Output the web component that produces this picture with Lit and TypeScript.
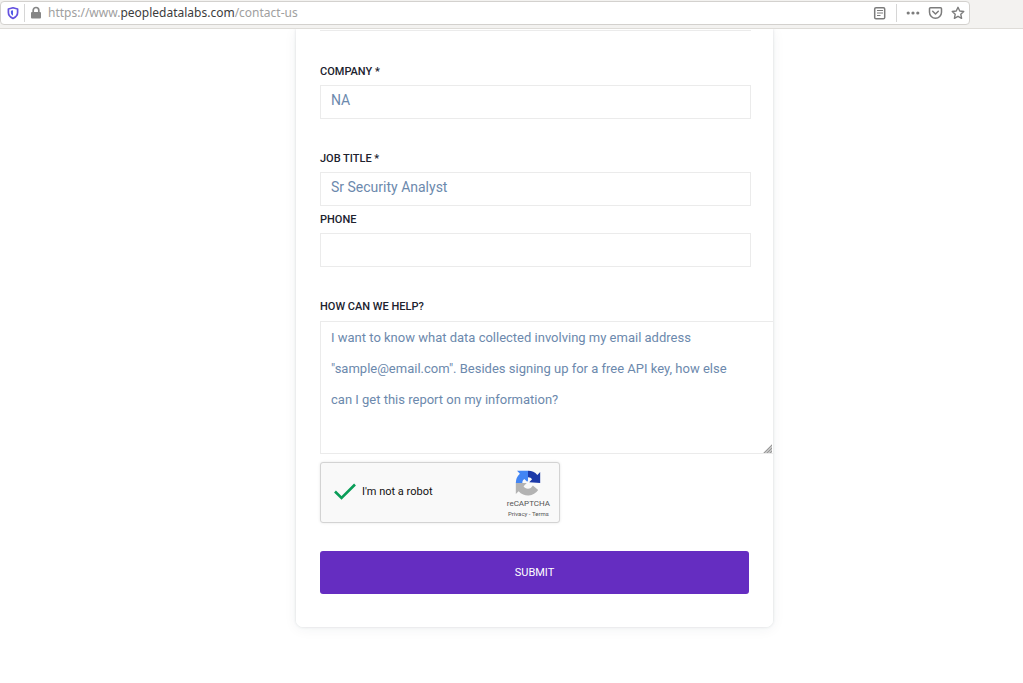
import { LitElement, html, css } from "lit";
import { customElement, property } from "lit/decorators.js";

@customElement("browser-bar")
class BrowserBar extends LitElement {
  static styles = css`
    :host {
      display: block;
    }
    .bar {
      box-sizing: border-box;
      height: 29px;
      padding-top: 1px;
      background: #f3f2f0;
      border-bottom: 1px solid #dedcd8;
    }
    .address {
      box-sizing: border-box;
      display: flex;
      align-items: center;
      height: 24px;
      margin-right: 53px;
      padding: 0 4px 0 6px;
      background: #fff;
      border: 1px solid #d3d1ce;
      border-radius: 4px;
    }
    button {
      display: block;
      flex: none;
      margin: 0;
      padding: 0;
      border: 0;
      background: none;
      line-height: 0;
    }
    svg {
      display: block;
    }
    .divider {
      flex: none;
      width: 1px;
      height: 18px;
      background: #d6d6d6;
      margin: 0 5px;
    }
    .url {
      flex: 1;
      min-width: 0;
      margin-left: 6px;
      font: 12px/18px "Noto Sans", "Open Sans", sans-serif;
      color: #a0a0a0;
      white-space: nowrap;
    }
    .host {
      color: #3c3c3c;
    }
    .tools {
      display: flex;
      align-items: center;
      gap: 8px;
    }
    .tools .divider {
      margin: 0 1px;
    }
  `;

  render() {
    return html`
      <header class="bar">
        <div class="address">
          <button aria-label="Tracking protection">
            <svg width="12" height="14" viewBox="0 0 12 14">
              <path d="M6 1.800 10.600 3v3.600c0 2.700-1.700 4.600-4.600 5.900C3.100 11.200 1.400 9.300 1.400 6.600V3z" fill="#fff" stroke="#6552e0" stroke-width="1.700" stroke-linejoin="round" />
              <path d="M6 4.200v5.600C4.500 8.900 3.900 7.900 3.900 6.600V4.700z" fill="#4f5be8" />
            </svg>
          </button>
          <span class="divider"></span>
          <button aria-label="Site information">
            <svg width="12" height="14" viewBox="0 0 12 14">
              <rect x="1" y="6" width="10" height="6.500" rx="1" fill="#858585" />
              <path d="M3.200 6.500V4.300a2.800 2.800 0 0 1 5.600 0v2.200" fill="none" stroke="#858585" stroke-width="1.700" />
            </svg>
          </button>
          <span class="url">https://www.<span class="host">peopledatalabs.com</span>/contact-us</span>
          <div class="tools">
            <button aria-label="Reader view">
              <svg width="14" height="14" viewBox="0 0 14 14" fill="none" stroke="#7c7c7c">
                <rect x="1.700" y="1.700" width="10" height="11" rx="1.300" stroke-width="1.500" />
                <path d="M4 4.500h6M4 7h6M4 9.500h3.500" />
              </svg>
            </button>
            <span class="divider"></span>
            <button aria-label="Page actions">
              <svg width="14" height="14" viewBox="0 0 14 14" fill="#7c7c7c">
                <circle cx="2.200" cy="7" r="1.600" />
                <circle cx="7" cy="7" r="1.600" />
                <circle cx="11.800" cy="7" r="1.600" />
              </svg>
            </button>
            <button aria-label="Save to Pocket">
              <svg width="15" height="14" viewBox="0 0 15 14" fill="none" stroke="#7c7c7c" stroke-width="1.500" stroke-linecap="round" stroke-linejoin="round">
                <path d="M2.500 1.800h10a1 1 0 0 1 1 1v3.400a6 6 0 0 1-12 0V2.800a1 1 0 0 1 1-1z" />
                <path d="M4.700 5.300 7.500 8l2.800-2.700" />
              </svg>
            </button>
            <button aria-label="Bookmark this page">
              <svg width="14" height="14" viewBox="0 0 14 14">
                <path d="m7 1.300 1.750 3.700 4 .5-2.950 2.800.8 4L7 10.300l-3.600 2 .8-4L1.250 5.500l4-.5z" fill="none" stroke="#7c7c7c" stroke-width="1.400" stroke-linejoin="round" />
              </svg>
            </button>
          </div>
        </div>
      </header>
    `;
  }
}

@customElement("text-field")
class TextField extends LitElement {
  @property() label = "";
  @property() value = "";
  @property() type = "text";

  static styles = css`
    :host {
      display: block;
    }
    label {
      display: block;
      height: 20px;
      font: 500 11px/14px Roboto, sans-serif;
      color: #20222e;
    }
    input {
      box-sizing: border-box;
      display: block;
      width: 100%;
      height: 34px;
      margin: 0;
      padding: 0 10px 4px;
      border: 1px solid #ebebeb;
      border-radius: 0;
      background: #fff;
      font: 14px/20px Roboto, sans-serif;
      color: #6c89ad;
      outline: none;
    }
  `;

  render() {
    return html`
      <label for="field">${this.label}</label>
      <input id="field" type=${this.type} .value=${this.value} />
    `;
  }
}

@customElement("captcha-box")
class CaptchaBox extends LitElement {
  static styles = css`
    :host {
      display: block;
    }
    .box {
      box-sizing: border-box;
      display: flex;
      align-items: center;
      justify-content: space-between;
      width: 240px;
      height: 61px;
      padding: 0 9px 0 12px;
      background: #f9f9f9;
      border: 1px solid #d3d3d3;
      border-radius: 3px;
      box-shadow: 0 0 3px rgba(0, 0, 0, 0.1);
    }
    .check {
      display: flex;
      align-items: center;
      gap: 5px;
      padding-bottom: 2px;
      font: 11px/16px Roboto, sans-serif;
      color: #111;
    }
    svg {
      display: block;
    }
    .brand {
      display: flex;
      flex-direction: column;
      align-items: center;
      padding-top: 4px;
      font: 8px/10px Roboto, sans-serif;
      color: #555;
    }
    .name {
      margin-top: 3px;
    }
    .links {
      font-size: 6px;
      white-space: nowrap;
    }
    a {
      color: inherit;
      text-decoration: none;
    }
  `;

  render() {
    return html`
      <div class="box">
        <div class="check" role="checkbox" aria-checked="true" tabindex="0">
          <svg width="24" height="20" viewBox="0 0 24 20">
            <path d="M2 9.500 8.500 16 22 2.500" fill="none" stroke="#0a9d58" stroke-width="2.600" />
          </svg>
          <span>I'm not a robot</span>
        </div>
        <div class="brand">
          <svg width="26" height="26" viewBox="0 0 64 64">
            <path d="M62 32V5l-7 7A30 30 0 0 0 32 2v16c5 0 8 2 10 5l-7 7z" fill="#1c3aa9" />
            <path d="M32 2H5l7 7A30 30 0 0 0 2 32h16c0-5 2-8 5-10l7 7 2-3z" fill="#4285f4" />
            <path d="M2 32v27l7-7A30 30 0 0 0 57 49L44 38c-3 5-7 8-12 8-5 0-9-2-11-6l8-8z" fill="#b3b3b3" />
          </svg>
          <span class="name">reCAPTCHA</span>
          <span class="links"><a href="#">Privacy</a> - <a href="#">Terms</a></span>
        </div>
      </div>
    `;
  }
}

@customElement("contact-form")
class ContactForm extends LitElement {
  static styles = css`
    :host {
      display: block;
    }
    .card {
      overflow: hidden;
      padding: 0 24px 33px;
      background: #fff;
      border-radius: 0 0 7px 7px;
    }
    .shadow {
      border-radius: 0 0 7px 7px;
      box-shadow: 0 0 3px rgba(40, 50, 60, 0.16), 0 2px 14px rgba(40, 50, 60, 0.06);
    }
    .previous {
      height: 1px;
      margin: 0 -2px 34px 0;
      border-bottom: 1px solid #ebebeb;
    }
    text-field {
      margin-right: -2px;
    }
    .spaced {
      margin-bottom: 33px;
    }
    .tight {
      margin-bottom: 7px;
    }
    label {
      display: block;
      height: 21px;
      font: 500 11px/14px Roboto, sans-serif;
      color: #20222e;
    }
    .message {
      position: relative;
      margin: 0 -24px 8px 0;
    }
    textarea {
      box-sizing: border-box;
      display: block;
      width: 100%;
      height: 133px;
      margin: 0;
      padding: 0 24px 0 10px;
      border: 1px solid #ebebeb;
      border-right: 0;
      background: #fff;
      font: 13px/31px Roboto, sans-serif;
      color: #6c89ad;
      resize: none;
      outline: none;
      overflow: hidden;
    }
    .grip {
      position: absolute;
      right: 0;
      bottom: 0;
    }
    .submit {
      display: block;
      width: 100%;
      height: 43px;
      margin-top: 28px;
      padding: 0;
      border: 0;
      border-radius: 3px;
      background: #652dc1;
      font: 11px/14px Roboto, sans-serif;
      color: #fff;
    }
  `;

  render() {
    return html`
      <div class="shadow">
        <form class="card" @submit=${(e: Event) => e.preventDefault()}>
          <div class="previous"></div>
          <text-field class="spaced" label="COMPANY *" value="NA"></text-field>
          <text-field class="tight" label="JOB TITLE *" value="Sr Security Analyst"></text-field>
          <text-field class="spaced" label="PHONE" type="tel"></text-field>
          <label for="help">HOW CAN WE HELP?</label>
          <div class="message">
            <textarea id="help" .value=${'I want to know what data collected involving my email address "sample@email.com". Besides signing up for a free API key, how else can I get this report on my information?'}></textarea>
            <svg class="grip" width="10" height="10" viewBox="0 0 10 10">
              <path d="M0 9 9 0v9z" fill="#c4c4c4" />
              <path d="M1 9 9 1M4 9l5-5M7 9l2-2" stroke="#999" />
            </svg>
          </div>
          <captcha-box></captcha-box>
          <button class="submit" type="submit">SUBMIT</button>
        </form>
      </div>
    `;
  }
}

@customElement("app-root")
class AppRoot extends LitElement {
  static styles = css`
    :host {
      display: block;
      min-height: 100vh;
      background: #fff;
    }
    browser-bar {
      position: relative;
      z-index: 1;
    }
    .page {
      display: grid;
      grid-template-columns: 296fr 477fr 250fr;
    }
    contact-form {
      grid-column: 2;
      min-width: 0;
    }
  `;

  render() {
    return html`
      <browser-bar></browser-bar>
      <main class="page"><contact-form></contact-form></main>
    `;
  }
}
